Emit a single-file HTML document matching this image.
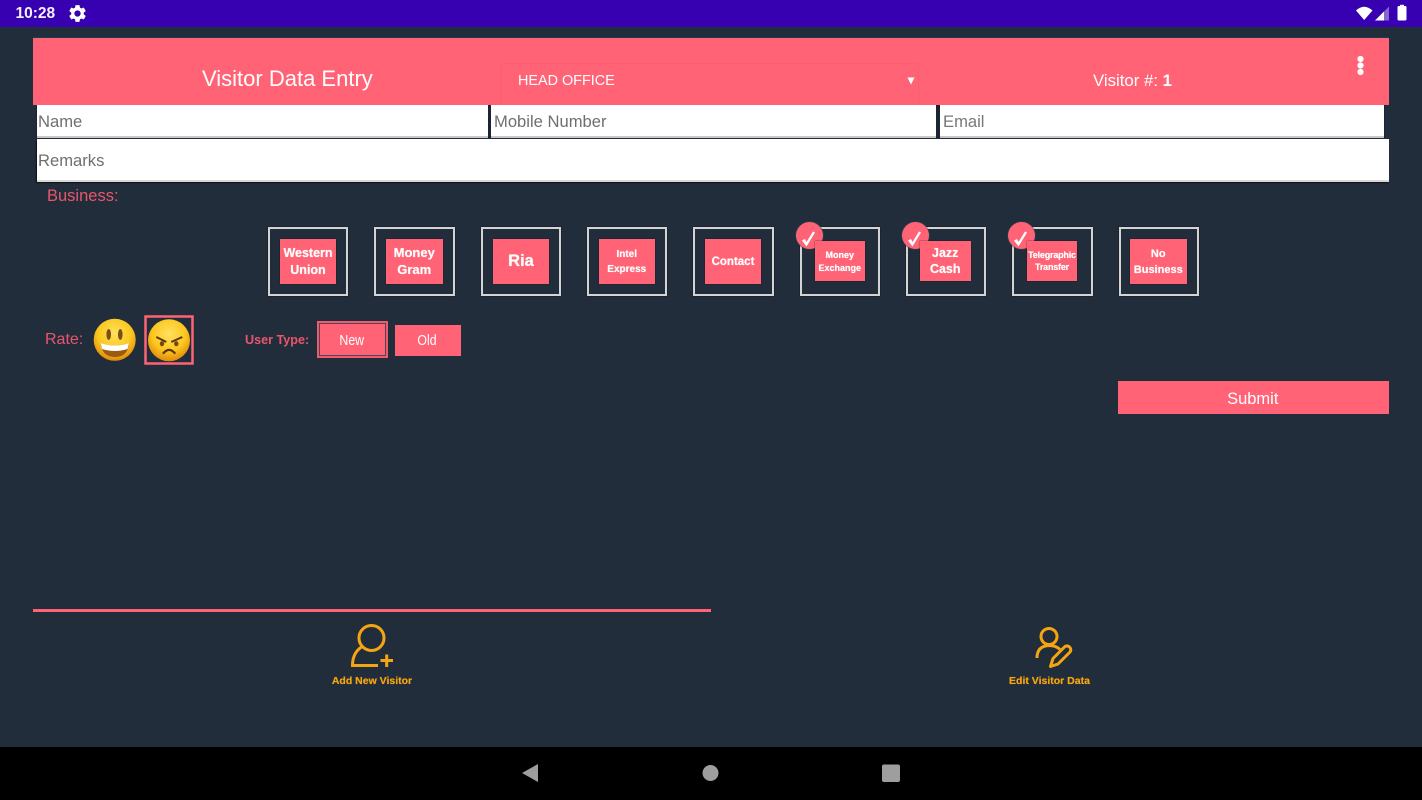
<!DOCTYPE html>
<html><head><meta charset="utf-8"><title>Visitor Data Entry</title>
<style>
html,body{margin:0;padding:0;width:1422px;height:800px;overflow:hidden;background:#222d3c}
body{position:relative;font-family:"Liberation Sans",sans-serif}
.a{position:absolute}
.t{position:absolute;white-space:nowrap;line-height:1}
.f{position:absolute;background:#fff;box-sizing:border-box;border-bottom:2px solid #c8c8c8;color:#6f6f6f;font-size:16.6px}
.f span{position:absolute;left:2px}
.b{position:absolute;top:226.500px;height:69.500px;box-sizing:border-box;border:2px solid #d4d4d4;box-shadow:0 0 1px #000}
.i{position:absolute;background:#ff6375;color:#fff;font-weight:bold;display:flex;align-items:center;justify-content:center;text-align:center;box-shadow:0 0 1px #111;text-shadow:0 0 .6px #fff;box-sizing:border-box}
.d{padding-top:2px}
.c{position:absolute;width:27px;height:27px;border-radius:50%;background:#ff6375;top:222px;box-shadow:0 0 1px .5px #2f4a55}
</style></head><body>
<div class="a" style="left:0;top:0;width:1422px;height:26.5px;background:#3700b1"></div>
<div class="t" style="left:15.5px;top:6px;color:#fff;font-size:15.5px;font-weight:bold;opacity:.95">10:28</div>
<svg class="a" style="left:67px;top:3px" width="21" height="21" viewBox="0 0 24 24"><path fill="#fff" d="M19.14 12.94c.04-.3.06-.61.06-.94s-.02-.64-.07-.94l2.03-1.58a.49.49 0 0 0 .12-.61l-1.92-3.32a.49.49 0 0 0-.59-.22l-2.39.96a7 7 0 0 0-1.62-.94l-.36-2.54a.48.48 0 0 0-.48-.41h-3.84a.48.48 0 0 0-.47.41l-.36 2.54c-.59.24-1.13.57-1.62.94l-2.39-.96a.49.49 0 0 0-.59.22L2.74 8.87a.48.48 0 0 0 .12.61l2.03 1.58c-.05.3-.09.63-.09.94s.02.64.07.94l-2.03 1.58a.49.49 0 0 0-.12.61l1.92 3.32c.12.22.37.29.59.22l2.39-.96c.5.38 1.03.7 1.62.94l.36 2.54c.05.24.24.41.48.41h3.84c.24 0 .44-.17.47-.41l.36-2.54c.59-.24 1.13-.56 1.62-.94l2.39.96c.22.08.47 0 .59-.22l1.92-3.32a.48.48 0 0 0-.12-.61zM12 15.6a3.6 3.6 0 1 1 0-7.2 3.6 3.6 0 0 1 0 7.2z"/></svg>
<svg class="a" style="left:1350px;top:0" width="62" height="26" viewBox="0 0 62 26"><path fill="#fff" d="M6 10.5Q14 3 22.5 10.5L14.2 20z"/><path fill="#fff" d="M25 20.5L39 6.500v14z" opacity=".4"/><path fill="#fff" d="M25 20.5L34 11.500v9z"/><rect x="47.500" y="6" width="9" height="14.500" rx="1.200" fill="#fff"/><rect x="50" y="4.800" width="4" height="2" fill="#fff"/></svg>

<div class="a" style="left:33px;top:38px;width:1356px;height:67px;background:#ff6375;box-shadow:0 -1px 1px #1a4050"></div>
<div class="t" style="left:202px;top:68px;color:#fff;font-size:22px">Visitor Data Entry</div>
<div class="a" style="left:500px;top:63px;width:419px;height:42px;box-sizing:border-box;border:1px solid #f9606f;border-bottom:0;border-radius:4px 4px 0 0"></div>
<div class="t" style="left:518px;top:74px;color:#fff;font-size:14.400px">HEAD OFFICE</div>
<svg class="a" style="left:906px;top:76px" width="10" height="10"><path d="M1.500 1.500h7L5 8.500z" fill="#fff"/></svg>
<div class="t" style="left:1093px;top:72.500px;color:#fff;font-size:16.800px">Visitor #: <b>1</b></div>
<svg class="a" style="left:1353px;top:54px" width="15" height="24"><circle cx="7.500" cy="5" r="3.100" fill="#fff"/><circle cx="7.500" cy="11.500" r="3.100" fill="#fff"/><circle cx="7.500" cy="18" r="3.100" fill="#fff"/></svg>

<div class="a" style="left:36px;top:105px;width:1349px;height:33px;background:#1a2433"></div>
<div class="f" style="left:37px;top:105px;width:450.500px;height:33px"><span style="top:7px;left:1px">Name</span></div>
<div class="f" style="left:491px;top:105px;width:444.500px;height:33px"><span style="top:7px;left:3px">Mobile Number</span></div>
<div class="f" style="left:940px;top:105px;width:444px;height:33px"><span style="top:7px;left:3px;color:#777">Email</span></div>
<div class="f" style="left:37px;top:139px;width:1352px;height:43px;border-bottom:2px solid #d8d8d8;box-shadow:-1px 1px 1px #111"><span style="top:12px;left:1px">Remarks</span></div>

<div class="t" style="left:47px;top:188px;color:#e9566a;font-size:16.500px">Business:</div>

<div class="b" style="left:267.500px;width:80.500px"></div>
<div class="b" style="left:374px;width:80.500px"></div>
<div class="b" style="left:480.500px;width:80.500px"></div>
<div class="b" style="left:586.500px;width:80.500px"></div>
<div class="b" style="left:693px;width:80.500px"></div>
<div class="b" style="left:799.500px;width:80.500px"></div>
<div class="b" style="left:905.500px;width:80.500px"></div>
<div class="b" style="left:1012px;width:80.500px"></div>
<div class="b" style="left:1118.500px;width:80.500px"></div>

<div class="c" style="left:796px"></div>
<div class="c" style="left:902px"></div>
<div class="c" style="left:1008px"></div>
<svg class="a" style="left:795px;top:222px" width="28" height="28"><path d="M7 18.500L10 17L11.500 20L18 9.500L20 10.500L11.500 24.500z" fill="#fff"/></svg>
<svg class="a" style="left:901px;top:222px" width="28" height="28"><path d="M7 18.500L10 17L11.500 20L18 9.500L20 10.500L11.500 24.500z" fill="#fff"/></svg>
<svg class="a" style="left:1007px;top:222px" width="28" height="28"><path d="M7 18.500L10 17L11.500 20L18 9.500L20 10.500L11.500 24.500z" fill="#fff"/></svg>

<div class="i d" style="left:280px;top:238.500px;width:56px;height:45px;font-size:12.500px;line-height:17px">Western<br>Union</div>
<div class="i" style="left:386px;top:238.500px;width:56.500px;height:45px;font-size:13px;line-height:17px">Money<br>Gram</div>
<div class="i" style="left:493px;top:238.500px;width:56px;height:45px;font-size:16.500px">Ria</div>
<div class="i d" style="left:598.500px;top:238.500px;width:56.500px;height:45px;font-size:10px;line-height:15px">Intel<br>Express</div>
<div class="i d" style="left:705px;top:238.500px;width:56px;height:45px;font-size:11.500px">Contact</div>
<div class="i d" style="left:814.500px;top:241px;width:50.500px;height:40px;font-size:9px;line-height:13.500px">Money<br>Exchange</div>
<div class="i" style="left:920px;top:241px;width:50.500px;height:40px;font-size:12.500px;line-height:16px">Jazz<br>Cash</div>
<div class="i" style="left:1027px;top:241px;width:50px;height:40px;font-size:9px;line-height:12.500px;letter-spacing:-.2px">Telegraphic<br>Transfer</div>
<div class="i d" style="left:1130px;top:238.500px;width:56.500px;height:45px;font-size:11px;line-height:16px">No<br>Business</div>

<div class="t" style="left:45px;top:332px;color:#e9566a;font-size:16px">Rate:</div>
<svg class="a" style="left:90px;top:315px" width="110" height="52" viewBox="0 0 110 52">
<defs><radialGradient id="g" cx="50%" cy="35%" r="65%"><stop offset="0" stop-color="#ffe060"/><stop offset=".6" stop-color="#fcc81f"/><stop offset="1" stop-color="#e08a0c"/></radialGradient></defs>
<circle cx="24.700" cy="24.800" r="21" fill="url(#g)"/>
<ellipse cx="18.700" cy="19.500" rx="2.300" ry="5.500" fill="#7a5012"/><ellipse cx="30.300" cy="19.500" rx="2.300" ry="5.500" fill="#7a5012"/>
<path d="M10.500 28Q25 33 39 28Q38 42 25 42Q12 42 10.500 28z" fill="#9a5a10"/><path d="M10.500 28Q25 33 39 28L37.500 34Q25 38 12 34z" fill="#fff"/>
<rect x="55.500" y="1.500" width="47" height="47" fill="none" stroke="#ff6375" stroke-width="2.500"/>
<circle cx="79" cy="25.300" r="21" fill="url(#g)"/>
<path d="M66.300 22l10 5M92.300 22l-11 5" stroke="#5b3510" stroke-width="2" fill="none"/>
<ellipse cx="72" cy="28.700" rx="2.200" ry="2.600" fill="#7a4510"/><ellipse cx="86.300" cy="28.700" rx="2.200" ry="2.600" fill="#7a4510"/>
<path d="M73 38.700Q79 31 85.300 38.700" stroke="#5b3510" stroke-width="2.200" fill="none"/>
</svg>
<div class="t" style="left:245px;top:334px;color:#e9566a;font-size:12.600px;font-weight:bold">User Type:</div>
<div class="a" style="left:316.500px;top:321px;width:71.500px;height:37px;box-sizing:border-box;background:#ff6375;border:2px solid #f2596c;box-shadow:inset 0 0 0 1px #4a4558"></div>
<div class="t" style="left:315.500px;width:71.500px;text-align:center;top:333px;color:#fff;font-size:15px;transform:scaleX(.82)">New</div>
<div class="a" style="left:395px;top:325px;width:66px;height:31px;background:#ff6375"></div>
<div class="t" style="left:394px;width:66px;text-align:center;top:333px;color:#fff;font-size:15px;transform:scaleX(.82)">Old</div>

<div class="a" style="left:1117.500px;top:381px;width:271.500px;height:33px;background:#ff6375"></div>
<div class="t" style="left:1117px;width:271.500px;text-align:center;top:391px;color:#fff;font-size:16.500px">Submit</div>

<div class="a" style="left:33px;top:609px;width:678px;height:3px;background:#ff6375"></div>
<svg class="a" style="left:340px;top:615px" width="60" height="60" viewBox="340 615 60 60" fill="none" stroke="#f5a50f" stroke-width="3">
<circle cx="371.500" cy="638" r="12.500"/>
<path d="M361.500 647Q352.500 653 352.500 665.500H378"/>
<path d="M380.500 660.500h12.500M386.700 654.500v12.500"/></svg>
<div class="t" style="left:312px;width:120px;text-align:center;top:675.500px;color:#f5a50f;font-size:10.500px;font-weight:bold;text-shadow:0 0 .5px #f5a50f">Add New Visitor</div>
<svg class="a" style="left:1030px;top:620px" width="50" height="52" viewBox="1030 620 50 52" fill="none" stroke="#f5a50f" stroke-width="3">
<circle cx="1049" cy="636.500" r="8"/>
<path d="M1037 658Q1037 646 1049 645.500Q1056 645.500 1060 649.500"/>
<path d="M1050.500 666.500L1053 658.500L1065 646.500Q1067.500 645 1070 647.500Q1071.500 650 1070 652L1058 664z" stroke-linejoin="round"/></svg>
<div class="t" style="left:989px;width:121px;text-align:center;top:675.500px;color:#f5a50f;font-size:10.500px;font-weight:bold;text-shadow:0 0 .5px #f5a50f">Edit Visitor Data</div>

<div class="a" style="left:0;top:747px;width:1422px;height:53px;background:#000"></div>
<svg class="a" style="left:515px;top:760px" width="395" height="26" viewBox="515 760 395 26" fill="#9e9e9e">
<path d="M538 764v18l-16-9z"/><circle cx="710.500" cy="773" r="8"/><rect x="882" y="764.500" width="18" height="17.500" rx="2"/></svg>
</body></html>
